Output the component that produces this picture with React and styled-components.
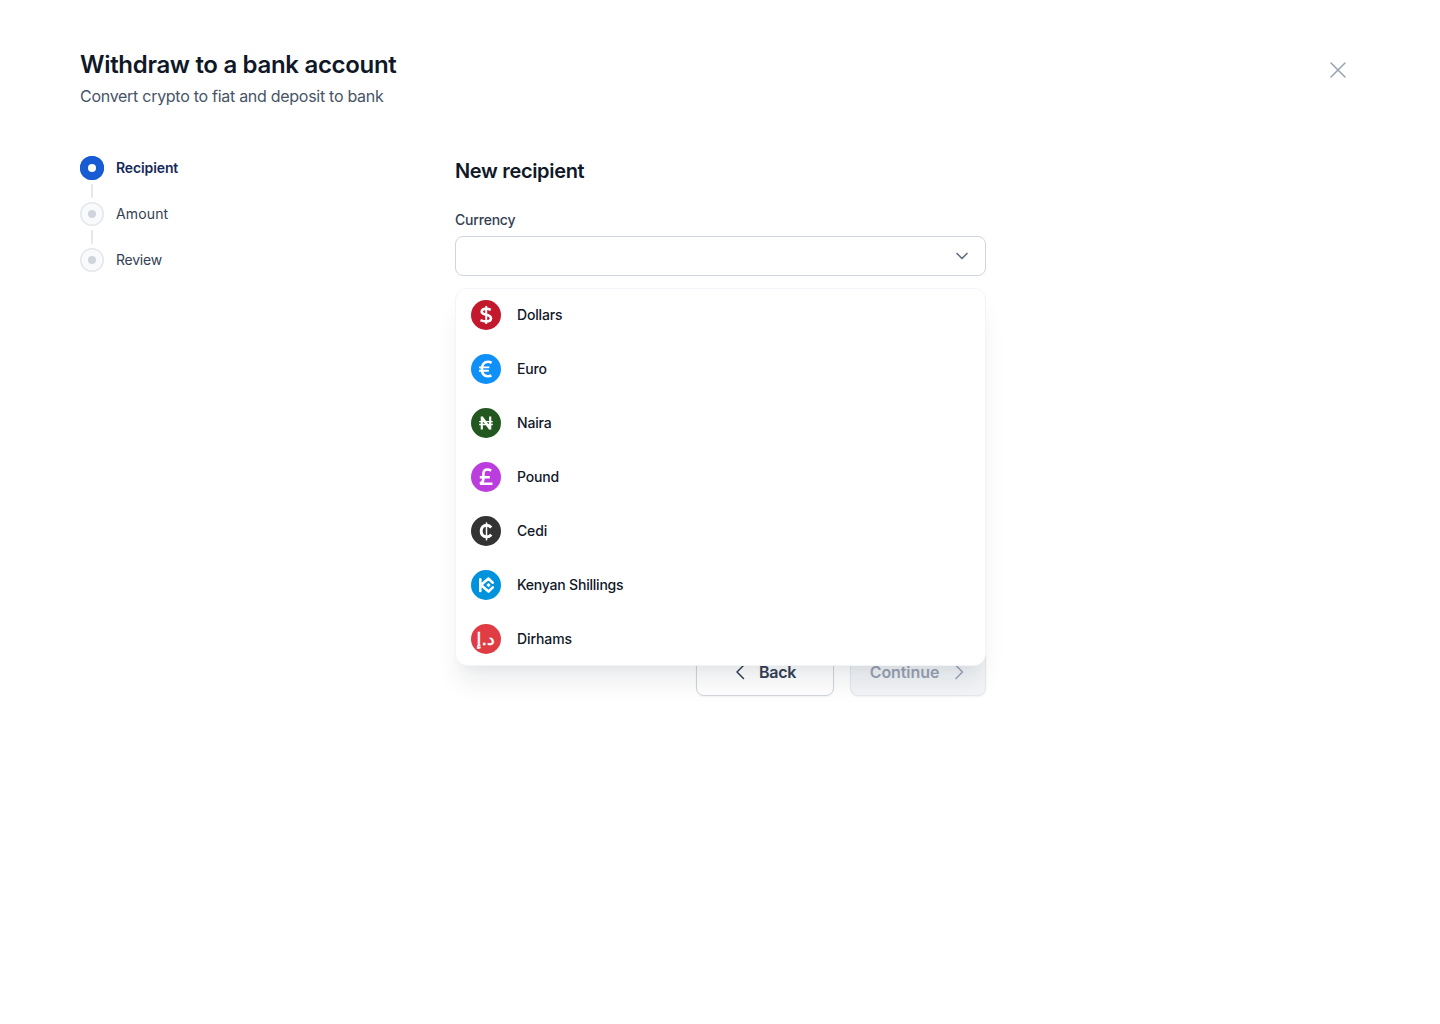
import React from "react";
import styled, { createGlobalStyle } from "styled-components";

const GlobalStyle = createGlobalStyle`
  * { box-sizing: border-box; }
  body {
    margin: 0;
    background: #fff;
    font-family: "Inter", "Liberation Sans", sans-serif;
    color: #101828;
  }
  button { font: inherit; margin: 0; }
`;

const Page = styled.div`
  min-height: 1024px;
  padding: 48px 80px;
`;

const Header = styled.header`
  display: flex;
  justify-content: space-between;
  align-items: flex-start;
  height: 108px;
`;

const Title = styled.h1`
  margin: 0;
  padding-top: 1px;
  font-size: 24px;
  line-height: 32px;
  font-weight: 600;
  letter-spacing: -0.31px;
  white-space: nowrap;
`;

const Subtitle = styled.p`
  margin: 3px 0 0;
  font-size: 16px;
  line-height: 24px;
  letter-spacing: -0.28px;
  color: #475467;
  white-space: nowrap;
`;

const CloseButton = styled.button`
  display: flex;
  align-items: center;
  justify-content: center;
  width: 44px;
  height: 44px;
  padding: 0;
  border: 0;
  background: none;
  color: #98a2b3;
`;

const Body = styled.div`
  display: grid;
  grid-template-columns: 375px 531px;
  align-items: start;
`;

const Steps = styled.ol`
  display: flex;
  flex-direction: column;
  list-style: none;
  margin: 0;
  padding: 0;
`;

const Step = styled.li`
  display: flex;
  align-items: center;
  gap: 12px;
  height: 24px;
  font-size: 14px;
  line-height: 20px;
  font-weight: ${(p) => (p.$active ? 600 : 400)};
  letter-spacing: ${(p) => p.$tracking}px;
  color: ${(p) => (p.$active ? "#15295b" : "#344054")};
`;

const StepMark = styled.span`
  display: grid;
  place-items: center;
  width: 24px;
  height: 24px;
  border-radius: 50%;
  box-shadow: inset 0 0 0 1.5px ${(p) => (p.$active ? "#175cd3" : "#e4e7ec")};
  background: ${(p) => (p.$active ? "#175cd3" : "#f9fafb")};
  &::after {
    content: "";
    width: 8px;
    height: 8px;
    border-radius: 50%;
    background: ${(p) => (p.$active ? "#fff" : "#d0d5dd")};
  }
`;

const Connector = styled.li`
  width: 2px;
  height: 14px;
  margin: 4px 0 4px 11px;
  border-radius: 2px;
  background: #e4e7ec;
`;

const Form = styled.section`
  display: flex;
  flex-direction: column;
`;

const FormTitle = styled.h2`
  margin: 0;
  font-size: 20px;
  line-height: 30px;
  font-weight: 600;
  letter-spacing: -0.33px;
`;

const Label = styled.label`
  margin-top: 24px;
  font-size: 14px;
  line-height: 20px;
  font-weight: 500;
  letter-spacing: -0.2px;
  color: #344054;
`;

const Field = styled.div`
  position: relative;
  margin-top: 6px;
`;

const Select = styled.button`
  display: flex;
  align-items: center;
  justify-content: flex-end;
  width: 100%;
  height: 40px;
  padding: 0 13px;
  border: 1px solid #d0d5dd;
  border-radius: 8px;
  background: #fff;
  color: #667085;
`;

const Menu = styled.ul`
  position: absolute;
  z-index: 1;
  top: 52px;
  left: 0;
  width: 531px;
  height: 378px;
  margin: 0;
  padding: 0;
  list-style: none;
  background: #fff;
  border: 1px solid #f2f4f7;
  border-radius: 12px;
  box-shadow: 0 20px 24px -4px rgba(16, 24, 40, 0.08), 0 8px 8px -4px rgba(16, 24, 40, 0.03);
`;

const Option = styled.li`
  display: flex;
  align-items: center;
  gap: 16px;
  height: 54px;
  padding-left: 15px;
  font-size: 14px;
  line-height: 20px;
  font-weight: 500;
  letter-spacing: ${(p) => p.$tracking}px;
  &:first-child { margin-top: -1px; }
`;

const Actions = styled.div`
  display: flex;
  justify-content: flex-end;
  gap: 16px;
  margin-top: 372px;
`;

const Action = styled.button`
  display: flex;
  align-items: center;
  justify-content: center;
  gap: 8px;
  width: ${(p) => p.$width}px;
  height: 48px;
  padding: ${(p) => (p.$muted ? "0 0 0 5px" : "0 7px 0 0")};
  border: 1px solid ${(p) => (p.$muted ? "#e4e7ec" : "#d0d5dd")};
  border-radius: 8px;
  background: ${(p) => (p.$muted ? "#f2f4f7" : "#fff")};
  color: ${(p) => (p.$muted ? "#98a2b3" : "#344054")};
  box-shadow: 0 1px 2px rgba(16, 24, 40, 0.05);
  font-size: 16px;
  line-height: 24px;
  font-weight: 600;
  letter-spacing: ${(p) => p.$tracking}px;
`;

function Stroke({ size = 20, d, width = 1.5 }) {
  return (
    <svg width={size} height={size} viewBox={`0 0 ${size} ${size}`} fill="none" stroke="currentColor"
      strokeWidth={width} strokeLinecap="round" strokeLinejoin="round">
      <path d={d} />
    </svg>
  );
}

function Coin({ color, children }) {
  return (
    <svg width="30" height="30" viewBox="0 0 30 30" fill="none" stroke="#fff" strokeWidth="2.6">
      <circle cx="15" cy="15" r="15" fill={color} stroke="none" />
      {children}
    </svg>
  );
}

const currencies = [
  { name: "Dollars", color: "#c3192d", tracking: -0.16, mark: (
    <>
      <path d="M19.8 9.8C18.4 9.1 17 8.7 15.4 8.7C12.5 8.7 10.7 9.8 10.7 11.7C10.7 15.7 20 13.9 20 18.2C20 20.3 18 21.4 15 21.4C12.9 21.4 11.3 20.9 9.5 20.1" />
      <path d="M15.2 6V24" strokeWidth="2" />
    </>
  ) },
  { name: "Euro", color: "#0f8ff8", tracking: -0.16, mark: (
    <>
      <path d="M20.6 8.7C19.3 8.1 18.3 7.8 17 7.8C13.1 7.8 10.9 10.7 10.9 15.1C10.9 19.7 13 22.2 16.8 22.2C18.1 22.2 19.3 22 20.4 21.5" />
      <path d="M8 13.4H18.4M8 16.8H17.8" strokeWidth="1.9" />
    </>
  ) },
  { name: "Naira", color: "#22581f", tracking: -0.16, mark: (
    <>
      <path d="M10.8 21.6V8.5M19.2 21.6V8.5" strokeWidth="2.1" />
      <path d="M10.8 9.2L19.2 20.9" strokeWidth="2.6" />
      <path d="M8.2 13.6H21.8M8.2 16.5H21.8" strokeWidth="1.4" />
    </>
  ) },
  { name: "Pound", color: "#bb3ddd", tracking: -0.16, mark: (
    <path d="M20.2 8.6C19 7.9 17.8 7.5 16.5 7.5C13.7 7.5 12.4 8.9 12.4 12V16.5C12.4 19.1 11.3 20.8 9 21.7H21.5M8.8 15.2H18.8" />
  ) },
  { name: "Cedi", color: "#333", tracking: -0.16, mark: (
    <>
      <path d="M20.3 11.4C19 10 17.5 9.3 15.8 9.3C12.4 9.3 10.2 11.5 10.2 15.1C10.2 18.8 12.4 20.9 15.8 20.9C17.6 20.9 19 20.1 20.4 18.7" strokeWidth="3" />
      <path d="M15.5 6.4V24.4" strokeWidth="1.5" />
    </>
  ) },
  { name: "Kenyan Shillings", color: "#0093dd", tracking: -0.21, mark: (
    <>
      <path d="M9.3 9.2V21M10 15.1L17.5 8.6L21.8 12.7M10 15.1L17.5 21.6L21.8 17.4" strokeWidth="2.6" strokeLinecap="round" strokeLinejoin="round" />
      <path d="M17.5 13L19.6 15.1L17.5 17.2L15.4 15.1Z" fill="#fff" stroke="none" />
    </>
  ) },
  { name: "Dirhams", color: "#df3d43", tracking: -0.1, mark: (
    <text x="14.6" y="20.6" fill="#fff" strokeWidth="0.5" textAnchor="middle" direction="rtl" fontSize="16.5"
      fontFamily='"DejaVu Sans", sans-serif' textLength="18" lengthAdjust="spacingAndGlyphs">د.إ</text>
  ) },
];

export default function App() {
  return (
    <Page>
      <GlobalStyle />
      <Header>
        <div>
          <Title>Withdraw to a bank account</Title>
          <Subtitle>Convert crypto to fiat and deposit to bank</Subtitle>
        </div>
        <CloseButton aria-label="Close">
          <Stroke size={24} d="M5 5L19 19M19 5L5 19" />
        </CloseButton>
      </Header>
      <Body>
        <Steps>
          <Step $active $tracking={-0.12}><StepMark $active />Recipient</Step>
          <Connector />
          <Step $tracking={0.15}><StepMark />Amount</Step>
          <Connector />
          <Step $tracking={-0.24}><StepMark />Review</Step>
        </Steps>
        <Form>
          <FormTitle>New recipient</FormTitle>
          <Label>Currency</Label>
          <Field>
            <Select aria-label="Currency">
              <Stroke d="M5 7.5L10 12.5L15 7.5" width={1.67} />
            </Select>
            <Menu>
              {currencies.map((c) => (
                <Option key={c.name} $tracking={c.tracking}>
                  <Coin color={c.color}>{c.mark}</Coin>
                  {c.name}
                </Option>
              ))}
            </Menu>
          </Field>
          <Actions>
            <Action $width={138} $tracking={-0.25}>
              <Stroke size={24} d="M16.5 5.5L10 12L16.5 18.5" />
              Back
            </Action>
            <Action $width={136} $tracking={-0.08} $muted>
              Continue
              <Stroke size={24} d="M9 5.5L15.5 12L9 18.5" />
            </Action>
          </Actions>
        </Form>
      </Body>
    </Page>
  );
}
